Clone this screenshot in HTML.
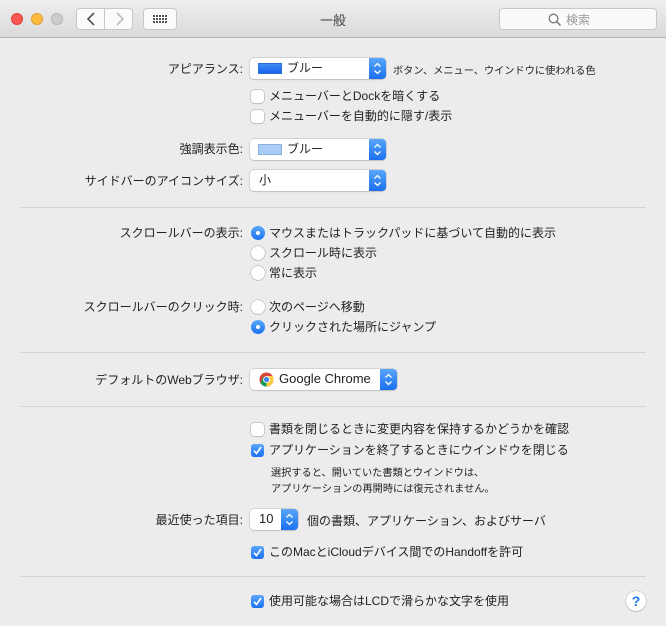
<!DOCTYPE html>
<html><head><meta charset="utf-8">
<style>
*{margin:0;padding:0;box-sizing:border-box}
body{width:666px;height:626px;background:#ececec;font-family:"Liberation Sans","Noto Sans CJK JP",sans-serif;font-size:12px;color:#222;position:relative;overflow:hidden}
.tb{position:absolute;left:0;top:0;width:666px;height:38px;background:linear-gradient(#eeeeee,#dadada);border-bottom:1px solid #b5b5b5}
.tl{position:absolute;top:13px;width:12px;height:12px;border-radius:50%}
.btn{position:absolute;top:8px;height:22px;background:#fbfbfb;border:1px solid #c8c8c8;border-radius:4px}
.a{position:absolute;white-space:nowrap}
.lbl{position:absolute;right:423px;white-space:nowrap;line-height:16px}
.pop{position:absolute;left:250px;height:21px;background:#fff;border-radius:4px;box-shadow:0 0 0 0.5px #b8b8b8,0 1px 1px rgba(0,0,0,.15)}
.pop .ar{position:absolute;right:0;top:0;width:17px;height:100%;background:linear-gradient(#5aa6fb,#1a6ff0);border-radius:0 4px 4px 0}
.pop .t{position:absolute;top:2px;line-height:16px}
.cb{position:absolute;left:251px;width:13px;height:13px;border-radius:3px;background:#fff;box-shadow:0 0 0 0.5px #a9a9a9,0 1px 1px rgba(0,0,0,.1)}
.cb.on{background:linear-gradient(#5ba7fc,#1b71f1);box-shadow:none}
.rd{position:absolute;left:251px;width:14px;height:14px;border-radius:50%;background:#fff;box-shadow:0 0 0 0.5px #a9a9a9,0 1px 1px rgba(0,0,0,.1)}
.rd.on{background:linear-gradient(#5ba7fc,#1b71f1);box-shadow:none}
.rd.on::after{content:"";position:absolute;left:5px;top:5px;width:4px;height:4px;border-radius:50%;background:#fff}
.txt{position:absolute;left:269px;white-space:nowrap;line-height:16px}
.sep{position:absolute;left:20px;width:626px;height:1px;background:#d3d3d3}
.sm{font-size:10.2px}
</style></head><body>
<div class="tb">
 <div class="tl" style="left:11px;background:#fc5753;border:0.5px solid #de3f3b"></div>
 <div class="tl" style="left:31px;background:#fdbc40;border:0.5px solid #dea030"></div>
 <div class="tl" style="left:51px;background:#cdcdcd;border:0.5px solid #b5b5b5"></div>
 <div class="btn" style="left:76px;width:29px;border-radius:4px 0 0 4px"><svg width="29" height="20" viewBox="0 0 29 20"><path d="M17 4 L11 10 L17 16" stroke="#555" stroke-width="1.6" fill="none"/></svg></div>
 <div class="btn" style="left:104px;width:29px;border-radius:0 4px 4px 0"><svg width="29" height="20" viewBox="0 0 29 20"><path d="M12 4 L18 10 L12 16" stroke="#bbb" stroke-width="1.6" fill="none"/></svg></div>
 <div class="btn" style="left:143px;width:34px"><svg width="32" height="20" viewBox="0 0 32 20"><g fill="#555"><rect x="9" y="6" width="2" height="2"/><rect x="12" y="6" width="2" height="2"/><rect x="15" y="6" width="2" height="2"/><rect x="18" y="6" width="2" height="2"/><rect x="21" y="6" width="2" height="2"/><rect x="9" y="9" width="2" height="2"/><rect x="12" y="9" width="2" height="2"/><rect x="15" y="9" width="2" height="2"/><rect x="18" y="9" width="2" height="2"/><rect x="21" y="9" width="2" height="2"/><rect x="9" y="12" width="2" height="2"/><rect x="12" y="12" width="2" height="2"/><rect x="15" y="12" width="2" height="2"/><rect x="18" y="12" width="2" height="2"/><rect x="21" y="12" width="2" height="2"/></g></svg></div>
 <div class="a" style="left:320px;top:10px;color:#444;font-size:13px">一般</div>
 <div class="btn" style="left:499px;width:158px;background:#fafafa"><svg style="position:absolute;left:48px;top:4px" width="14" height="14" viewBox="0 0 14 14"><circle cx="5.5" cy="5.5" r="4.3" stroke="#777" stroke-width="1.3" fill="none"/><path d="M8.7 8.7 L12.5 12.5" stroke="#777" stroke-width="1.5"/></svg><span class="a" style="left:66px;top:2px;color:#999;font-size:12px">検索</span></div>
</div>

<div class="lbl" style="top:61px">アピアランス:</div>
<div class="pop" style="top:58px;width:136px"><div style="position:absolute;left:8px;top:5px;width:24px;height:11px;background:linear-gradient(#3e8cf5,#1865ea);border:0.5px solid #2a6fd8"></div><span class="t" style="left:37px">ブルー</span><div class="ar"><svg width="17" height="21" viewBox="0 0 17 21"><path d="M5.5 8.5 L8.5 5.5 L11.5 8.5 M5.5 12.5 L8.5 15.5 L11.5 12.5" stroke="#fff" stroke-width="1.3" fill="none"/></svg></div></div>
<div class="a sm" style="left:393px;top:62px">ボタン、メニュー、ウインドウに使われる色</div>
<div class="cb" style="top:90px"></div><div class="txt" style="top:88px">メニューバーとDockを暗くする</div>
<div class="cb" style="top:110px"></div><div class="txt" style="top:108px">メニューバーを自動的に隠す/表示</div>

<div class="lbl" style="top:141px">強調表示色:</div>
<div class="pop" style="top:139px;width:136px"><div style="position:absolute;left:8px;top:5px;width:24px;height:11px;background:#a9cdf7;border:0.5px solid #8ab0dc"></div><span class="t" style="left:37px">ブルー</span><div class="ar"><svg width="17" height="21" viewBox="0 0 17 21"><path d="M5.5 8.5 L8.5 5.5 L11.5 8.5 M5.5 12.5 L8.5 15.5 L11.5 12.5" stroke="#fff" stroke-width="1.3" fill="none"/></svg></div></div>
<div class="lbl" style="top:173px">サイドバーのアイコンサイズ:</div>
<div class="pop" style="top:170px;width:136px"><span class="t" style="left:9px">小</span><div class="ar"><svg width="17" height="21" viewBox="0 0 17 21"><path d="M5.5 8.5 L8.5 5.5 L11.5 8.5 M5.5 12.5 L8.5 15.5 L11.5 12.5" stroke="#fff" stroke-width="1.3" fill="none"/></svg></div></div>

<div class="sep" style="top:207px"></div>

<div class="lbl" style="top:225px">スクロールバーの表示:</div>
<div class="rd on" style="top:226px"></div><div class="txt" style="top:225px">マウスまたはトラックパッドに基づいて自動的に表示</div>
<div class="rd" style="top:246px"></div><div class="txt" style="top:245px">スクロール時に表示</div>
<div class="rd" style="top:266px"></div><div class="txt" style="top:265px">常に表示</div>
<div class="lbl" style="top:299px">スクロールバーのクリック時:</div>
<div class="rd" style="top:300px"></div><div class="txt" style="top:299px">次のページへ移動</div>
<div class="rd on" style="top:320px"></div><div class="txt" style="top:319px">クリックされた場所にジャンプ</div>

<div class="sep" style="top:352px"></div>

<div class="lbl" style="top:372px">デフォルトのWebブラウザ:</div>
<div class="pop" style="top:369px;width:147px"><svg style="position:absolute;left:9px;top:3px" width="15" height="15" viewBox="0 0 16 16"><circle cx="8" cy="8" r="7.5" fill="#db4437"/><path d="M8 8 L1.5 11.75 A7.5 7.5 0 0 0 8 15.5 L11.5 9.5 Z" fill="#0f9d58"/><path d="M8 8 L8 15.5 A7.5 7.5 0 0 0 14.5 4.25 L8 4.25 Z" fill="#ffcd40"/><path d="M1.5 11.75 L8 8 L4.5 5 Z" fill="#0f9d58"/><circle cx="8" cy="8" r="3.6" fill="#fff"/><circle cx="8" cy="8" r="2.8" fill="#4285f4"/></svg><span class="t" style="left:29px;font-size:13px">Google Chrome</span><div class="ar"><svg width="17" height="21" viewBox="0 0 17 21"><path d="M5.5 8.5 L8.5 5.5 L11.5 8.5 M5.5 12.5 L8.5 15.5 L11.5 12.5" stroke="#fff" stroke-width="1.3" fill="none"/></svg></div></div>

<div class="sep" style="top:406px"></div>

<div class="cb" style="top:423px"></div><div class="txt" style="top:421px">書類を閉じるときに変更内容を保持するかどうかを確認</div>
<div class="cb on" style="top:444px"><svg width="13" height="13" viewBox="0 0 13 13"><path d="M3 6.8 L5.5 9.5 L10 3" stroke="#fff" stroke-width="1.6" fill="none"/></svg></div><div class="txt" style="top:442px">アプリケーションを終了するときにウインドウを閉じる</div>
<div class="a sm" style="left:271px;top:464px">選択すると、開いていた書類とウインドウは、</div>
<div class="a sm" style="left:271px;top:480px">アプリケーションの再開時には復元されません。</div>

<div class="lbl" style="top:512px">最近使った項目:</div>
<div class="pop" style="top:509px;width:48px"><span class="t" style="left:9px;font-size:13px">10</span><div class="ar"><svg width="17" height="21" viewBox="0 0 17 21"><path d="M5.5 8.5 L8.5 5.5 L11.5 8.5 M5.5 12.5 L8.5 15.5 L11.5 12.5" stroke="#fff" stroke-width="1.3" fill="none"/></svg></div></div>
<div class="a" style="left:307px;top:512px">個の書類、アプリケーション、およびサーバ</div>
<div class="cb on" style="top:546px"><svg width="13" height="13" viewBox="0 0 13 13"><path d="M3 6.8 L5.5 9.5 L10 3" stroke="#fff" stroke-width="1.6" fill="none"/></svg></div><div class="txt" style="top:544px">このMacとiCloudデバイス間でのHandoffを許可</div>

<div class="sep" style="top:576px"></div>

<div class="cb on" style="top:595px"><svg width="13" height="13" viewBox="0 0 13 13"><path d="M3 6.8 L5.5 9.5 L10 3" stroke="#fff" stroke-width="1.6" fill="none"/></svg></div><div class="txt" style="top:593px">使用可能な場合はLCDで滑らかな文字を使用</div>
<div style="position:absolute;left:626px;top:591px;width:20px;height:20px;border-radius:50%;background:#fff;box-shadow:0 0 0 0.5px #b0b0b0,0 1px 1px rgba(0,0,0,.15);color:#1f74e8;font-weight:bold;font-size:14px;text-align:center;line-height:20px">?</div>
</body></html>
